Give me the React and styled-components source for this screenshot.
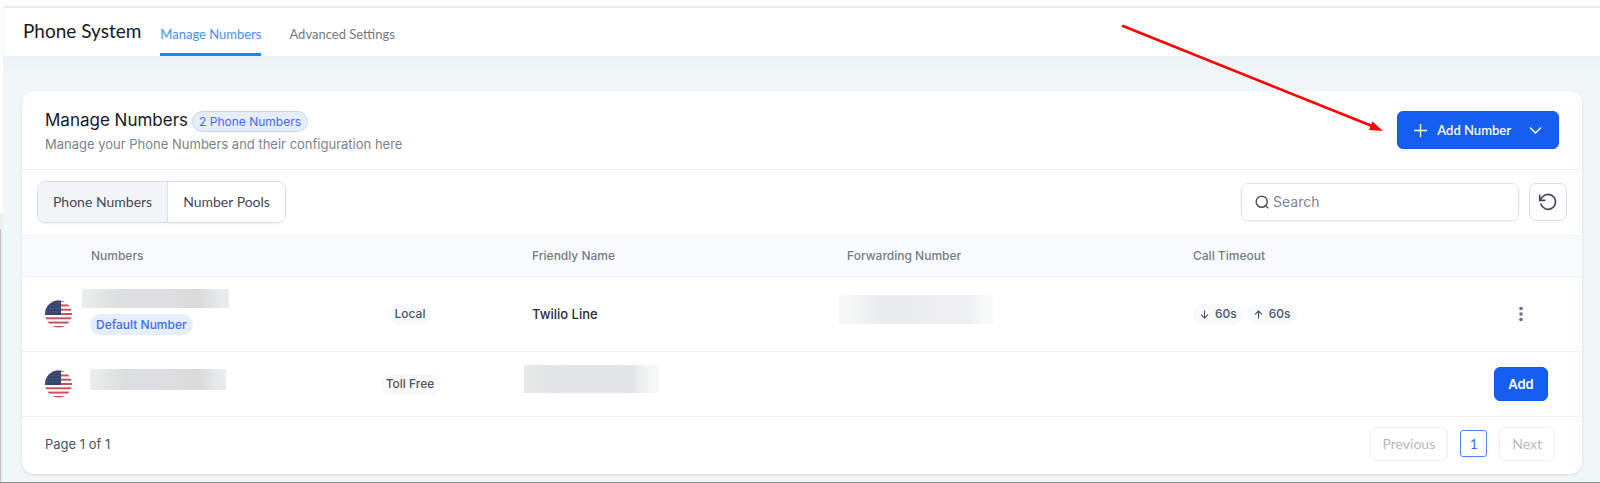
import React from "react";
import styled, { createGlobalStyle, css } from "styled-components";

const lato = `Lato, "Liberation Sans", sans-serif`;
const inter = `Inter, "Liberation Sans", sans-serif`;

const GlobalStyle = createGlobalStyle`
  *, *::before, *::after { box-sizing: border-box; }
  body { margin: 0; background: #fff; font-family: ${inter}; color: #344054; }
  button, input { font: inherit; margin: 0; }
  h1, h2, p { margin: 0; font-weight: 400; }
`;

const Shell = styled.div`
  position: relative;
  display: grid;
  grid-template-columns: 3px 1fr;
  min-height: 100vh;
  border-bottom: 1px solid #8b8e90;
`;

const Gutter = styled.div`
  background: linear-gradient(to bottom, #fff 213px, #eeefef 213px);
  &::after {
    content: "";
    display: block;
    width: 1px;
    height: calc(100% - 229px);
    margin-top: 229px;
    background: #bfc1c2;
  }
`;

const Page = styled.div`
  display: flex;
  flex-direction: column;
  min-width: 0;
  padding-top: 6px;
`;

const TopBar = styled.header`
  display: flex;
  align-items: stretch;
  height: 50px;
  padding-left: 19px;
  border-top: 2px solid #ebecec;
  border-left: 1px solid #f0f3f5;
  background: #fff;
  font-family: ${lato};
`;

const PageTitle = styled.h1`
  padding-top: 11px;
  margin-right: 19px;
  font-size: 19px;
  line-height: 24px;
  color: #16191d;
`;

const Tabs = styled.nav`
  display: flex;
  gap: 28px;
`;

const Tab = styled.a`
  padding-top: 16px;
  font-size: 13px;
  line-height: 20px;
  text-decoration: none;
  color: ${(p) => (p.$active ? "#4590f8" : "#737b82")};
  border-bottom: 3px solid ${(p) => (p.$active ? "#0d8bf9" : "transparent")};
`;

const Main = styled.main`
  flex: 1;
  padding: 35px 18px 7px 19px;
  background: linear-gradient(to bottom, #edf2f6, #f1f6f9 16px);
`;

const Card = styled.section`
  border-radius: 12px;
  background: #fff;
  box-shadow: 0 1px 3px rgba(16, 24, 40, 0.12);
  overflow: hidden;
`;

const CardHeader = styled.div`
  display: flex;
  justify-content: space-between;
  align-items: flex-start;
  padding: 17px 23px 15px;
  border-bottom: 1px solid #eff1f4;
`;

const TitleRow = styled.div`
  display: flex;
  align-items: center;
  gap: 4px;
`;

const CardTitle = styled.h2`
  font-size: 17px;
  line-height: 24px;
  color: #16191f;
`;

const Subtitle = styled.p`
  font-size: 13px;
  line-height: 20px;
  margin-top: 2px;
  color: #7b838c;
`;

const Badge = styled.span`
  display: inline-flex;
  align-items: center;
  gap: 5px;
  height: 21px;
  padding: 0 6px;
  border-radius: 12px;
  font-size: 12px;
  line-height: 16px;
  font-weight: 500;
  white-space: nowrap;
  color: ${(p) => (p.$blue ? "#3f6df2" : "#4d5563")};
  background: ${(p) => (p.$blue ? "#e6eefd" : "#f8f9fb")};
  ${(p) => p.$outlined && css`
    border: 1px solid #c3d4fb;
    margin-top: 3px;
    font-weight: 400;
  `}
`;

const PrimaryButton = styled.button`
  display: inline-flex;
  align-items: center;
  justify-content: center;
  height: ${(p) => (p.$large ? "38px" : "34px")};
  margin-top: ${(p) => (p.$large ? "3px" : "0")};
  padding: 0 ${(p) => (p.$large ? "16px" : "13px")};
  border: 1px solid #0f56ec;
  border-radius: 6px;
  background: #155eef;
  color: #fff;
  font-family: ${(p) => (p.$large ? lato : inter)};
  font-size: 13px;
  font-weight: 600;
  line-height: 20px;
  svg:first-child { margin-right: 10px; }
  svg:last-child { margin-left: 18px; }
`;

const Toolbar = styled.div`
  display: flex;
  justify-content: space-between;
  align-items: center;
  padding: 11px 15px 12px;
`;

const Segments = styled.div`
  display: flex;
  border: 1px solid #d9dde4;
  border-radius: 8px;
  overflow: hidden;
  box-shadow: 0 1px 2px rgba(16, 24, 40, 0.05);
`;

const Segment = styled.button`
  height: 40px;
  padding: 0 15px;
  border: 0;
  background: ${(p) => (p.$active ? "#f2f4f7" : "#fff")};
  font-family: ${lato};
  font-size: 14px;
  line-height: 20px;
  color: #3f4859;
  & + & { border-left: 1px solid #d9dde4; }
`;

const Tools = styled.div`
  display: flex;
  gap: 10px;
`;

const SearchBox = styled.label`
  display: flex;
  align-items: center;
  gap: 4px;
  width: 278px;
  height: 38px;
  padding: 0 13px;
  border: 1px solid #e0e3e8;
  border-radius: 7px;
  color: #4d5665;
  box-shadow: 0 1px 2px rgba(16, 24, 40, 0.05);
`;

const SearchInput = styled.input`
  flex: 1;
  min-width: 0;
  padding: 0;
  border: 0;
  outline: 0;
  background: transparent;
  font-size: 14px;
  line-height: 20px;
  &::placeholder { color: #7d8590; opacity: 1; }
`;

const IconButton = styled.button`
  display: inline-flex;
  align-items: center;
  justify-content: center;
  width: 38px;
  height: 38px;
  padding: 0;
  color: #3f4859;
  background: transparent;
  border: ${(p) => (p.$plain ? "0" : "1px solid #d9dde4")};
  border-radius: 7px;
`;

const Table = styled.table`
  width: 100%;
  table-layout: fixed;
  border-collapse: collapse;
`;

const Col = styled.col`
  width: ${(p) => p.$w}px;
`;

const Th = styled.th`
  height: 41px;
  padding: 0 0 0 ${(p) => (p.$first ? "69px" : "24px")};
  border-top: 1px solid #f0f2f5;
  border-bottom: 1px solid #eceff2;
  background: #f9fafb;
  text-align: left;
  font-size: 12px;
  line-height: 16px;
  font-weight: 500;
  color: #757d87;
`;

const Row = styled.tr`
  height: ${(p) => (p.$tall ? "75px" : "65px")};
  border-bottom: 1px solid #eff1f4;
`;

const Td = styled.td`
  padding: 0 0 0 24px;
  font-size: 13px;
  line-height: 20px;
  font-weight: 500;
  color: #272c34;
  ${(p) => p.$first && css`padding-left: 23px;`}
  ${(p) => p.$centered && css`padding: 0; text-align: center;`}
  ${(p) => p.$hidden && css`padding: 0 0 10px 16px;`}
`;

const NumberCell = styled.div`
  display: flex;
  align-items: center;
  gap: ${(p) => (p.$stacked ? "9px" : "17px")};
`;

const NumberStack = styled.div`
  display: flex;
  flex-direction: column;
  align-items: flex-start;
  gap: 6px;
  padding-bottom: 4px;
  ${Badge} { margin-left: 8px; }
`;

const Redacted = styled.div`
  width: ${(p) => p.$w}px;
  height: ${(p) => p.$h}px;
  margin-bottom: ${(p) => (p.$raised ? "10px" : "0")};
  background: ${(p) => p.$faint
    ? "linear-gradient(to right, #f7f8f7, #f3f4f4 12%, #ebecee 25%, #ebecee 50%, #efeff1 65%, #eeeff0 84%, #f8f9f9 94%, #fafbfa)"
    : p.$fading
    ? "linear-gradient(to right, #e8eaea, #e2e4e5 20%, #e4e5e6 50%, #e3e4e6 80%, #f2f4f4 90%, #f8faf9)"
    : "linear-gradient(to right, #eceeed, #e4e5e5 12%, #dcddde 27%, #dedee0 55%, #dadadb 80%, #e6e7e8 92%, #ebecee)"};
`;

const Footer = styled.footer`
  display: flex;
  align-items: center;
  justify-content: space-between;
  height: 57px;
  padding: 0 27px 4px 23px;
  font-size: 13px;
  line-height: 20px;
  color: #4b5362;
`;

const Pager = styled.div`
  display: flex;
  align-items: center;
  gap: 12px;
`;

const PageButton = styled.button`
  height: 34px;
  padding: 0 12px;
  border: 1px solid #eceff2;
  border-radius: 7px;
  background: #fff;
  font-family: ${lato};
  font-size: 14px;
  line-height: 20px;
  color: #b4b9c1;
  ${(p) => p.$current && css`
    width: 27px;
    height: 27px;
    padding: 0;
    border-color: #5485f7;
    border-radius: 3px;
    color: #3f72f5;
  `}
`;

const Pointer = styled.svg`
  position: absolute;
  top: 22px;
  right: 216px;
  pointer-events: none;
`;

const Icon = ({ size = 16, stroke = 2, children }) => (
  <svg width={size} height={size} viewBox="0 0 24 24" fill="none" stroke="currentColor"
    strokeWidth={stroke} strokeLinecap="round" strokeLinejoin="round" aria-hidden="true">
    {children}
  </svg>
);

const Flag = ({ id }) => (
  <svg width="28" height="28" viewBox="0 0 28 28" role="img" aria-label="United States">
    <clipPath id={id}><circle cx="13.500" cy="14" r="13.5" /></clipPath>
    <g clipPath={`url(#${id})`}>
      <rect width="28" height="28" fill="#fff" />
      {[0, 1, 2, 3, 4, 5, 6].map((i) => (
        <rect key={i} y={i * 4.3 + 0.1} width="28" height="2" fill="#cb5360" />
      ))}
      <rect width="16" height="15" fill="#33456f" />
      {[2, 5, 8, 11].map((y) =>
        [2, 5, 8, 11, 14].map((x) => (
          <circle key={`${x}-${y}`} cx={x} cy={y + 0.8} r="0.5" fill="#7c89a8" />
        ))
      )}
    </g>
  </svg>
);

export default function App() {
  return (
    <>
      <GlobalStyle />
      <Shell>
        <Gutter />
        <Page>
          <TopBar>
            <PageTitle>Phone System</PageTitle>
            <Tabs>
              <Tab href="#numbers" $active>Manage Numbers</Tab>
              <Tab href="#advanced">Advanced Settings</Tab>
            </Tabs>
          </TopBar>
          <Main>
            <Card>
              <CardHeader>
                <div>
                  <TitleRow>
                    <CardTitle>Manage Numbers</CardTitle>
                    <Badge $blue $outlined>2 Phone Numbers</Badge>
                  </TitleRow>
                  <Subtitle>Manage your Phone Numbers and their configuration here</Subtitle>
                </div>
                <PrimaryButton $large>
                  <svg width="13" height="13" viewBox="0 0 13 13" fill="none" stroke="currentColor" strokeWidth="1.4" aria-hidden="true">
                    <path d="M6.5 0v13M0 6.5h13" />
                  </svg>
                  Add Number
                  <svg width="13" height="13" viewBox="0 0 13 13" fill="none" stroke="currentColor" strokeWidth="1.5" aria-hidden="true">
                    <path d="M1 3.5l5.500 5.500 5.500-5.500" />
                  </svg>
                </PrimaryButton>
              </CardHeader>
              <Toolbar>
                <Segments>
                  <Segment $active>Phone Numbers</Segment>
                  <Segment>Number Pools</Segment>
                </Segments>
                <Tools>
                  <SearchBox>
                    <Icon size={14} stroke={2.6}>
                      <circle cx="11.5" cy="11.5" r="9.5" />
                      <path d="M18 18l4 4" />
                    </Icon>
                    <SearchInput type="text" placeholder="Search" aria-label="Search" />
                  </SearchBox>
                  <IconButton aria-label="Refresh">
                    <Icon size={20}>
                      <path d="M2 4v6h6" />
                      <path d="M3.5 14.5a9 9 0 1 0 2-8.800L2 10" />
                    </Icon>
                  </IconButton>
                </Tools>
              </Toolbar>
              <Table>
                <colgroup>
                  <Col $w={290} /><Col $w={196} /><Col $w={315} />
                  <Col $w={346} /><Col $w={291} /><Col $w={122} />
                </colgroup>
                <thead>
                  <tr>
                    <Th $first>Numbers</Th>
                    <Th />
                    <Th>Friendly Name</Th>
                    <Th>Forwarding Number</Th>
                    <Th>Call Timeout</Th>
                    <Th />
                  </tr>
                </thead>
                <tbody>
                  <Row $tall>
                    <Td $first>
                      <NumberCell $stacked>
                        <Flag id="flag-local" />
                        <NumberStack>
                          <Redacted $w={147} $h={19} />
                          <Badge $blue>Default Number</Badge>
                        </NumberStack>
                      </NumberCell>
                    </Td>
                    <Td $centered><Badge>Local</Badge></Td>
                    <Td>Twilio Line</Td>
                    <Td $hidden><Redacted $faint $w={155} $h={29} /></Td>
                    <Td>
                      <TitleRow>
                        <Badge>
                          <Icon size={11} stroke={2.4}><path d="M12 4v16M5 13l7 7 7-7" /></Icon>60s
                        </Badge>
                        <Badge>
                          <Icon size={11} stroke={2.4}><path d="M12 20V4M5 11l7-7 7 7" /></Icon>60s
                        </Badge>
                      </TitleRow>
                    </Td>
                    <Td $centered>
                      <IconButton $plain aria-label="More actions">
                        <svg width="4" height="16" viewBox="0 0 4 16" fill="#667085" aria-hidden="true">
                          <circle cx="2" cy="2.5" r="1.8" /><circle cx="2" cy="8" r="1.8" /><circle cx="2" cy="13.5" r="1.8" />
                        </svg>
                      </IconButton>
                    </Td>
                  </Row>
                  <Row>
                    <Td $first>
                      <NumberCell>
                        <Flag id="flag-toll" />
                        <Redacted $raised $w={136} $h={21} />
                      </NumberCell>
                    </Td>
                    <Td $centered><Badge>Toll Free</Badge></Td>
                    <Td $hidden><Redacted $fading $w={135} $h={28} /></Td>
                    <Td />
                    <Td />
                    <Td $centered><PrimaryButton>Add</PrimaryButton></Td>
                  </Row>
                </tbody>
              </Table>
              <Footer>
                <span>Page 1 of 1</span>
                <Pager>
                  <PageButton>Previous</PageButton>
                  <PageButton $current>1</PageButton>
                  <PageButton>Next</PageButton>
                </Pager>
              </Footer>
            </Card>
          </Main>
        </Page>
        <Pointer width="264" height="112" viewBox="0 0 264 112" aria-hidden="true">
          <path d="M3 4L252 104" stroke="#fe0000" strokeWidth="2.6" strokeLinecap="round" />
          <path d="M263 109L249 108L252.500 99.500Z" fill="#fe0000" />
        </Pointer>
      </Shell>
    </>
  );
}
